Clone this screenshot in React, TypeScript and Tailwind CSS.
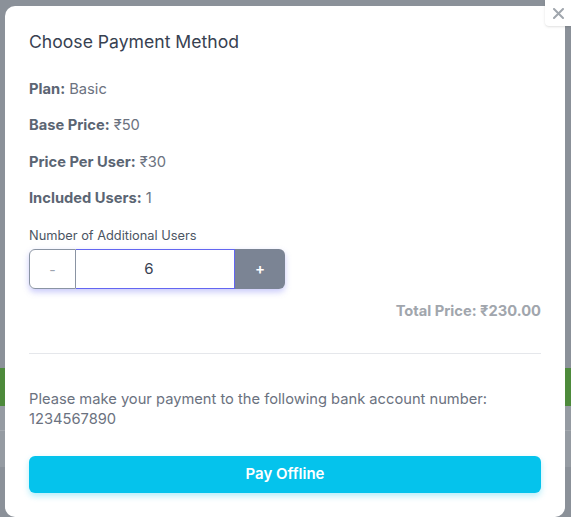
import { useState } from "react";

export default function App() {
  const [users, setUsers] = useState(6);
  const basePrice = 50;
  const perUser = 30;
  const total = basePrice + perUser * users;

  return (
    <div className="relative h-[517px] w-full overflow-hidden bg-[#8b9199] font-['Inter',sans-serif]">
      {/* page behind the overlay */}
      <div className="h-[368px]" />
      <div className="h-[38px] w-full bg-[#4d8a3b]" />
      <div className="h-[24px] w-full bg-[#959ba2]" />
      <div className="h-px w-full bg-[#a3a8ae]" />
      <div className="h-[36px] w-full bg-[#959ba2]" />

      {/* modal */}
      <div className="absolute left-[5px] top-[6px] w-[560px] rounded-[10px] bg-white p-6">
        <h2 className="text-[17.6px] leading-6 text-[#374151]">Choose Payment Method</h2>

        <div className="mt-[23px] flex flex-col gap-[12.4px] text-[14.7px] leading-6 text-[#6b7280]">
          <p>
            <span className="font-bold text-[#5b6573]">Plan:</span> Basic
          </p>
          <p>
            <span className="font-bold text-[#5b6573]">Base Price:</span> ₹{basePrice}
          </p>
          <p>
            <span className="font-bold text-[#5b6573]">Price Per User:</span> ₹{perUser}
          </p>
          <p>
            <span className="font-bold text-[#5b6573]">Included Users:</span> 1
          </p>
        </div>

        <label className="mt-4 block text-[12.8px] leading-5 text-[#4b5563]">Number of Additional Users</label>
        <div className="mt-[3px] flex h-10 w-[256px] rounded-md shadow-[0_3px_6px_rgba(99,102,241,0.35)]">
          <button
            className="w-[47px] rounded-l-md border border-[#8a94a3] text-[14px] text-[#9ca3af]"
            onClick={() => setUsers((u) => Math.max(0, u - 1))}
          >
            -
          </button>
          <input
            className="w-[159px] border border-l-0 border-[#6366f1] pr-[12px] text-center text-[15px] text-[#374151] outline-none"
            value={users}
            onChange={(e) => setUsers(Number(e.target.value) || 0)}
          />
          <button
            className="w-[50px] rounded-r-md bg-[#7b8494] text-[15px] font-semibold text-white"
            onClick={() => setUsers((u) => u + 1)}
          >
            +
          </button>
        </div>

        <p className="mt-[10px] text-right text-[14.7px] font-bold leading-6 text-[#a1a6ad]">
          Total Price: ₹{total.toFixed(2)}
        </p>

        <hr className="mt-[30px] border-[#e5e7eb]" />

        <p className="mt-[35px] text-[14.7px] leading-5 text-[#6b7280]">
          Please make your payment to the following bank account number:
          <br />
          1234567890
        </p>

        <button className="mt-[27px] h-[37px] w-full rounded-md bg-[#05c3ec] text-[15px] font-semibold text-white shadow-[0_3px_6px_rgba(5,195,236,0.3)]">
          Pay Offline
        </button>
      </div>

      {/* close */}
      <button
        aria-label="Close"
        className="absolute right-0 top-0 flex h-[26px] w-[26px] items-center justify-center rounded-bl-[4px] bg-white shadow-sm"
      >
        <svg width="11" height="11" viewBox="0 0 11 11" fill="none">
          <path d="M1 1L10 10M10 1L1 10" stroke="#a0a6ad" strokeWidth="2" strokeLinecap="round" />
        </svg>
      </button>
    </div>
  );
}
